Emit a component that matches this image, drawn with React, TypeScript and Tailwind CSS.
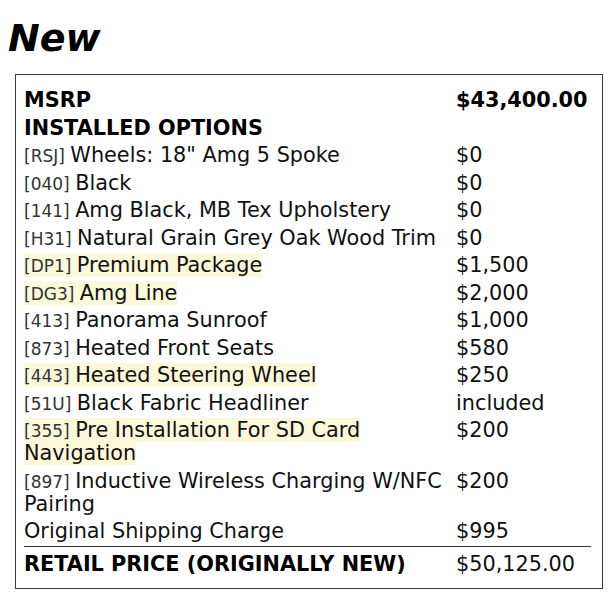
import React from "react";

type Row = {
  code?: string;
  label: string;
  price: string;
  highlight?: boolean;
};

const options: Row[] = [
  { code: "RSJ", label: 'Wheels: 18" Amg 5 Spoke', price: "$0" },
  { code: "040", label: "Black", price: "$0" },
  { code: "141", label: "Amg Black, MB Tex Upholstery", price: "$0" },
  { code: "H31", label: "Natural Grain Grey Oak Wood Trim", price: "$0" },
  { code: "DP1", label: "Premium Package", price: "$1,500", highlight: true },
  { code: "DG3", label: "Amg Line", price: "$2,000", highlight: true },
  { code: "413", label: "Panorama Sunroof", price: "$1,000" },
  { code: "873", label: "Heated Front Seats", price: "$580" },
  { code: "443", label: "Heated Steering Wheel", price: "$250", highlight: true },
  { code: "51U", label: "Black Fabric Headliner", price: "included" },
  { code: "355", label: "Pre Installation For SD Card Navigation", price: "$200", highlight: true },
  { code: "897", label: "Inductive Wireless Charging W/NFC Pairing", price: "$200" },
  { label: "Original Shipping Charge", price: "$995" },
];

function OptionRow({ row }: { row: Row }) {
  return (
    <>
      <div className="py-[2.25px]">
        <span className={row.highlight ? "bg-[#fcf9da]" : ""}>
          {row.code && <span className="text-[17px] leading-[14px] text-[#333]">[{row.code}] </span>}
          {row.label}
        </span>
      </div>
      <div className="py-[2.25px]">{row.price}</div>
    </>
  );
}

export default function App() {
  return (
    <div
      className="w-[609px] h-[597px] bg-white text-[#111] overflow-hidden"
      style={{ fontFamily: '"DejaVu Sans", Verdana, sans-serif' }}
    >
      <h1 className="pt-[17px] pl-[8px] text-[38px] font-bold italic text-black leading-[43px]">New</h1>

      <div className="mt-[14px] ml-[15px] w-[588px] h-[515px] border border-[#3a3a3a] pl-[8px] pr-[11px] pt-[12px]">
        <div className="grid grid-cols-[428px_1fr] gap-x-[4px] text-[20.8px] leading-[23px]">
          <div className="py-[2.25px] font-bold text-black">MSRP</div>
          <div className="py-[2.25px] font-bold text-black">$43,400.00</div>
          <div className="col-span-2 py-[2.25px] font-bold text-black">INSTALLED OPTIONS</div>

          {options.map((row) => (
            <OptionRow key={row.label} row={row} />
          ))}

          <div className="col-span-2 h-px bg-[#333]" />

          <div className="pt-[6px] font-bold text-black">RETAIL PRICE (ORIGINALLY NEW)</div>
          <div className="pt-[6px]">$50,125.00</div>
        </div>
      </div>
    </div>
  );
}
